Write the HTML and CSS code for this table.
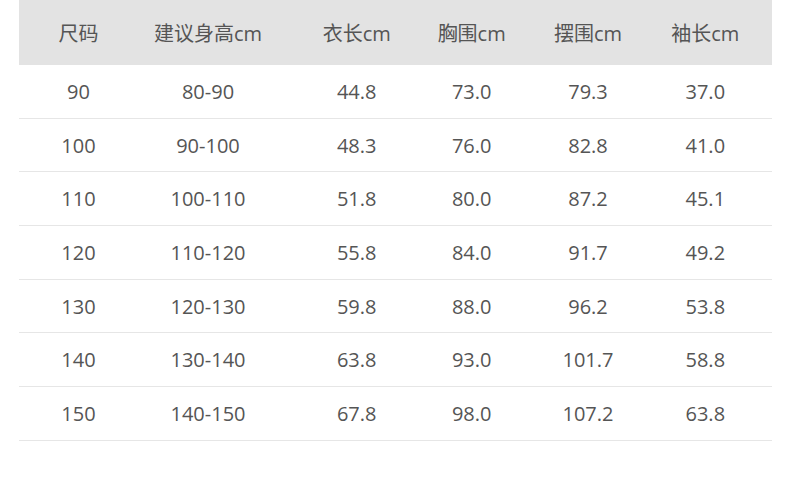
FILE: index.html
```html
<!DOCTYPE html>
<html lang="zh-CN">
<head>
<meta charset="utf-8">
<title>尺码表</title>
<link rel="stylesheet" href="styles.css">
</head>
<body>
<div class="size-table">
  <div class="row head">
    <div>尺码</div><div>建议身高cm</div><div>衣长cm</div><div>胸围cm</div><div>摆围cm</div><div>袖长cm</div>
  </div>
  <div class="row"><div>90</div><div>80-90</div><div>44.8</div><div>73.0</div><div>79.3</div><div>37.0</div></div>
  <div class="row"><div>100</div><div>90-100</div><div>48.3</div><div>76.0</div><div>82.8</div><div>41.0</div></div>
  <div class="row"><div>110</div><div>100-110</div><div>51.8</div><div>80.0</div><div>87.2</div><div>45.1</div></div>
  <div class="row"><div>120</div><div>110-120</div><div>55.8</div><div>84.0</div><div>91.7</div><div>49.2</div></div>
  <div class="row"><div>130</div><div>120-130</div><div>59.8</div><div>88.0</div><div>96.2</div><div>53.8</div></div>
  <div class="row"><div>140</div><div>130-140</div><div>63.8</div><div>93.0</div><div>101.7</div><div>58.8</div></div>
  <div class="row"><div>150</div><div>140-150</div><div>67.8</div><div>98.0</div><div>107.2</div><div>63.8</div></div>
</div>
</body>
</html>
```
FILE: styles.css
```css
html, body {
  margin: 0;
  padding: 0;
  background: #ffffff;
}
body {
  font-family: "Open Sans", "Noto Sans CJK SC", sans-serif;
  font-size: 20px;
  color: #555555;
}
.size-table {
  margin-left: 19px;
  width: 753px;
}
.row {
  display: grid;
  grid-template-columns: 110px 149px 148.4px 81.6px 151px 83.6px;
  padding-left: 4.5px;
  align-items: center;
  box-sizing: border-box;
  height: 53.7px;
  border-bottom: 1px solid #e6e6e6;
}
.row > div {
  text-align: center;
  white-space: nowrap;
}
.row.head {
  height: 65px;
  background: #e3e3e3;
  border-bottom: none;
}
```
